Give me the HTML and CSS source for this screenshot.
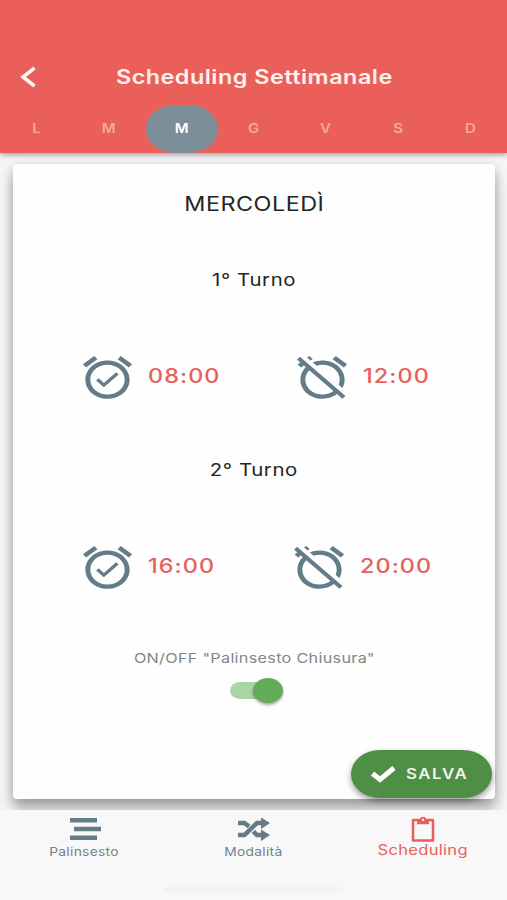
FILE: index.html
```html
<!DOCTYPE html>
<html lang="it">
<head>
  <meta charset="UTF-8">
  <meta name="viewport" content="width=device-width, initial-scale=1.0">
  <title>Scheduling Settimanale</title>
  <link rel="stylesheet" href="styles.css">
</head>
<body>
  <svg width="0" height="0" class="symbols">
    <symbol id="alarm-on" viewBox="0 0 24 24" preserveAspectRatio="none">
      <path d="M22 5.72l-4.6-3.86-1.29 1.53 4.6 3.86L22 5.72zM7.88 3.39L6.6 1.86 2 5.71l1.29 1.53 4.59-3.85zM12 4c-4.97 0-9 4.03-9 9s4.02 9 9 9c4.97 0 9-4.03 9-9s-4.03-9-9-9zm0 16c-3.87 0-7-3.13-7-7s3.13-7 7-7 7 3.13 7 7-3.13 7-7 7zM10.54 14.53L8.41 12.4l-1.06 1.06 3.18 3.18 6-6-1.06-1.06-4.93 4.95z"/>
    </symbol>
    <symbol id="alarm-off" viewBox="0 0 24 24" preserveAspectRatio="none">
      <path d="M12 6c3.87 0 7 3.13 7 7 0 .84-.16 1.65-.43 2.4l1.52 1.52c.58-1.19.91-2.51.91-3.92 0-4.97-4.03-9-9-9-1.41 0-2.73.33-3.92.91L9.6 6.43C10.35 6.16 11.16 6 12 6zm10-.28l-4.6-3.86-1.29 1.53 4.6 3.86L22 5.72zM2.92 2.29L1.65 3.57 2.98 4.9l-1.11.93 1.42 1.42 1.11-.94.8.8C3.83 8.69 3 10.75 3 13c0 4.97 4.02 9 9 9 2.25 0 4.31-.83 5.89-2.2l2.2 2.2 1.27-1.27L3.89 3.27l-.97-.98zm13.55 16.1C15.26 19.39 13.7 20 12 20c-3.87 0-7-3.13-7-7 0-1.7.61-3.26 1.61-4.47l9.86 9.86zM8.02 3.28L6.6 1.86l-.86.71 1.42 1.42.86-.71z"/>
    </symbol>
  </svg>

  <header class="header">
    <div class="toolbar">
      <svg class="back" viewBox="0 0 16 22"><path d="M14.500 2L3 11l11.500 9"/></svg>
      <h1><span class="wide">Scheduling Settimanale</span></h1>
    </div>
    <div class="days">
      <div class="day"><span class="wide">L</span></div>
      <div class="day"><span class="wide">M</span></div>
      <div class="day active"><span class="wide">M</span></div>
      <div class="day"><span class="wide">G</span></div>
      <div class="day"><span class="wide">V</span></div>
      <div class="day"><span class="wide">S</span></div>
      <div class="day"><span class="wide">D</span></div>
    </div>
  </header>

  <main class="content">
    <div class="card">
      <h2><span class="wide">MERCOLEDÌ</span></h2>
      <h3><span class="wide">1° Turno</span></h3>
      <div class="shift">
        <div class="time start">
          <svg><use href="#alarm-on"/></svg>
          <span class="wide">08:00</span>
        </div>
        <div class="time end">
          <svg><use href="#alarm-off"/></svg>
          <span class="wide">12:00</span>
        </div>
      </div>
      <h3><span class="wide">2° Turno</span></h3>
      <div class="shift second">
        <div class="time start">
          <svg><use href="#alarm-on"/></svg>
          <span class="wide">16:00</span>
        </div>
        <div class="time end">
          <svg><use href="#alarm-off"/></svg>
          <span class="wide">20:00</span>
        </div>
      </div>
      <p class="closing"><span class="wide">ON/OFF "Palinsesto Chiusura"</span></p>
      <div class="toggle"><div class="knob"></div></div>
    </div>
    <button class="save">
      <svg viewBox="0 0 26 18"><path d="M2.5 8.500l7.500 6L24 3"/></svg>
      <span class="wide">SALVA</span>
    </button>
  </main>

  <nav class="tabs">
    <div class="tab">
      <svg width="32" height="24" viewBox="0 0 32 24"><path d="M1 1h27v4.600H1zM5 9.700h27v4.600H5zM1 18.400h27V23H1z"/></svg>
      <span class="wide">Palinsesto</span>
    </div>
    <div class="tab">
      <svg width="32" height="24" viewBox="0 0 32 24">
        <path class="line" d="M0 6h6.500l4.500 3.500M0 18h6.500L19 6h6M15.300 14.300l3.700 3.700h6"/>
        <path d="M23 .500l9 5.500-9 6zM23 12.500l9 5.500-9 6z"/>
      </svg>
      <span class="wide">Modalità</span>
    </div>
    <div class="tab active">
      <svg width="24" height="26" viewBox="0 0 24 26">
        <path class="frame" d="M2 4h20v20.500H2z"/>
        <path d="M6 3.300h2.800a3.300 3.300 0 0 1 6.400 0H18v5H6z"/>
        <circle class="hole" cx="12" cy="3.800" r="1.200"/>
      </svg>
      <span class="wide">Scheduling</span>
    </div>
    <div class="home-bar"></div>
  </nav>
</body>
</html>
```

FILE: styles.css
```css
* {
  box-sizing: border-box;
}
body {
  margin: 0;
  height: 900px;
  display: flex;
  flex-direction: column;
  overflow: hidden;
  background-color: #f6f6f6;
  font-family: Inter, "Liberation Sans", sans-serif;
  color: #252525;
}
h1, h2, h3, p {
  margin: 0;
  text-align: center;
  white-space: nowrap;
}
.symbols {
  position: absolute;
}
.wide {
  display: inline-block;
  transform: scaleX(1.2);
}
.header {
  height: 153px;
  padding-top: 49px;
  background-color: #eb5f5b;
  box-shadow: 0 2px 5px rgba(0, 0, 0, 0.35);
  z-index: 1;
}
.toolbar {
  display: flex;
  align-items: center;
  height: 56px;
  padding-left: 20px;
}
.toolbar h1 {
  flex: 1;
  padding-right: 35px;
  font-size: 19.5px;
  font-weight: 600;
  letter-spacing: 0.4px;
  line-height: 56px;
  color: #fff1ee;
}
.back {
  width: 16px;
  height: 22px;
  fill: none;
  stroke: #fff5f2;
  stroke-width: 3.5;
}
.days {
  display: grid;
  grid-template-columns: repeat(7, 1fr);
  height: 48px;
}
.day {
  display: flex;
  align-items: center;
  justify-content: center;
  padding-bottom: 2px;
  border-radius: 29px / 24px;
  font-size: 12.5px;
  font-weight: 600;
  color: #f6a7a0;
}
.day.active {
  position: relative;
  left: 1px;
  background-color: #7c8f99;
  color: #fff;
}
.content {
  flex: 1;
  position: relative;
  padding: 11px 12px 11px 13px;
}
.card {
  height: 635px;
  border-radius: 4px;
  background-color: #fefefe;
  box-shadow: 0 10px 14px rgba(0, 0, 0, 0.3), 0 2px 12px rgba(0, 0, 0, 0.14);
}
.card h2 {
  height: 78px;
  line-height: 80px;
  font-size: 19.5px;
  font-weight: 400;
  letter-spacing: 0.4px;
}
.card h3 {
  height: 76px;
  line-height: 77px;
  font-size: 17px;
  font-weight: 400;
  letter-spacing: 0.5px;
}
.shift {
  display: grid;
  grid-template-columns: 1fr 1fr;
  height: 114px;
}
.time {
  display: flex;
  align-items: center;
  gap: 11px;
  padding-top: 5px;
}
.time.start {
  padding-left: 65px;
}
.time.end {
  padding-left: 39px;
}
.second .end {
  padding-left: 36px;
}
.time svg {
  width: 59px;
  height: 51px;
  fill: #647b88;
}
.time .wide {
  padding-bottom: 4px;
  font-size: 19.5px;
  font-weight: 500;
  letter-spacing: 0.9px;
  color: #e95f5b;
  transform-origin: left;
}
.closing {
  height: 68px;
  line-height: 72px;
  font-size: 13.5px;
  letter-spacing: 0.25px;
  color: #858585;
}
.toggle {
  position: relative;
  left: 2px;
  width: 53px;
  height: 17px;
  margin: -8px auto 0;
  border-radius: 10px / 8.5px;
  background-color: #a9d5a6;
}
.knob {
  position: relative;
  top: -4px;
  width: 30px;
  height: 25px;
  margin-left: auto;
  border-radius: 50%;
  background-color: #64ab59;
  box-shadow: 0 2px 3px rgba(0, 0, 0, 0.35);
}
.save {
  position: absolute;
  right: 15px;
  bottom: 12px;
  display: flex;
  align-items: center;
  gap: 16px;
  width: 141px;
  height: 48px;
  padding: 0 0 2px 19px;
  border: 0;
  border-radius: 29px / 24px;
  background-color: #4f8e45;
  box-shadow: 0 3px 6px rgba(0, 0, 0, 0.4);
  font: 600 14px Inter, sans-serif;
  color: #eef8ea;
}
.save .wide {
  letter-spacing: 1.3px;
  transform-origin: left;
}
.save svg {
  width: 26px;
  height: 18px;
  margin-top: 1px;
  margin-right: -6px;
  fill: none;
  stroke: #fff;
  stroke-width: 5;
}
.tabs {
  position: relative;
  display: grid;
  grid-template-columns: repeat(3, 1fr);
  height: 90px;
  background-color: #f8f8f8;
  z-index: 1;
}
.tab {
  display: flex;
  flex-direction: column;
  align-items: center;
  padding-top: 7px;
  font-size: 11.5px;
  line-height: 20px;
  letter-spacing: 0.25px;
  color: #71848f;
}
.tab svg {
  fill: #647b88;
}
.tab .wide {
  margin-top: 1px;
}
.tab .line {
  fill: none;
  stroke: #647b88;
  stroke-width: 4.5;
}
.tab.active {
  padding-top: 6px;
  font-size: 13.8px;
  color: #e95f5b;
}
.tab.active svg {
  fill: #e95f5b;
}
.tab.active .wide {
  margin-top: -2px;
}
.tab.active .frame {
  fill: none;
  stroke: #e95f5b;
  stroke-width: 2.5;
  stroke-linejoin: round;
}
.tab.active .hole {
  fill: #f8f8f8;
}
.home-bar {
  position: absolute;
  left: 164px;
  bottom: 8px;
  width: 179px;
  height: 5px;
  border-radius: 3px;
  background-color: #f2f2f2;
}
```
